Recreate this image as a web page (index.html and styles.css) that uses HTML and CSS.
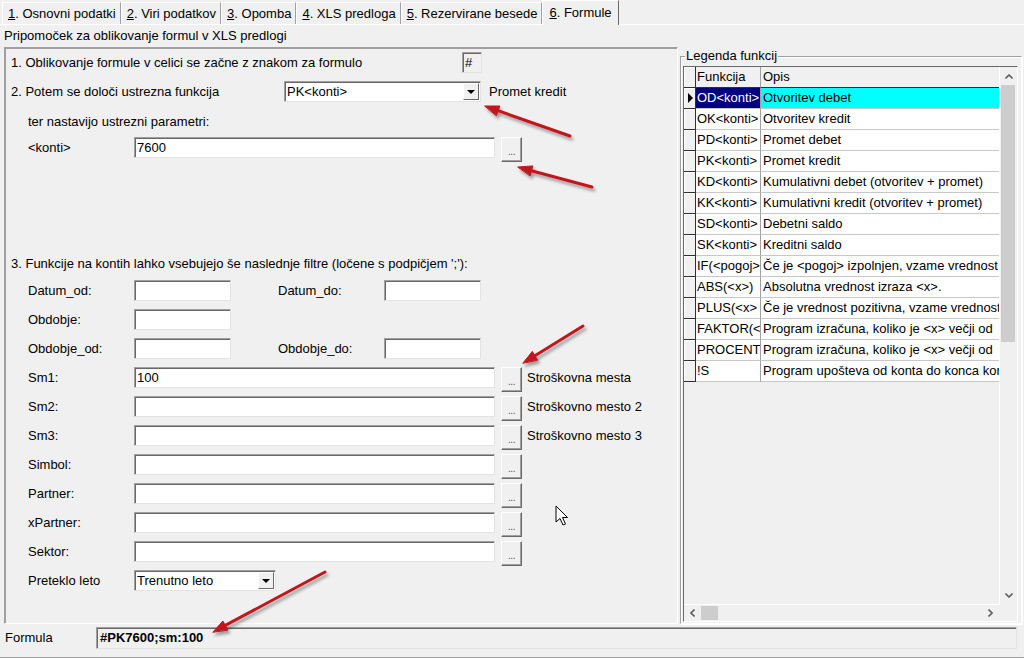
FILE: index.html
```html
<!DOCTYPE html>
<html lang="sl">
<head>
<meta charset="utf-8">
<title>Formule</title>
<link rel="stylesheet" href="styles.css">
</head>
<body>
<div class="window">
  <div class="tabs">
    <div class="tab"><u>1</u>. Osnovni podatki</div>
    <div class="tab"><u>2</u>. Viri podatkov</div>
    <div class="tab"><u>3</u>. Opomba</div>
    <div class="tab"><u>4</u>. XLS predloga</div>
    <div class="tab"><u>5</u>. Rezervirane besede</div>
    <div class="tab active"><u>6</u>. Formule</div>
  </div>
  <div class="caption">Pripomoček za oblikovanje formul v XLS predlogi</div>
  <div class="main">
    <div class="left">
      <div class="row r1 pad">
        <span class="t1">1. Oblikovanje formule v celici se začne z znakom za formulo</span>
        <div class="hash">#</div>
      </div>
      <div class="row r2 pad">
        <span class="t2">2. Potem se določi ustrezna funkcija</span>
        <div class="combo c-fn"><span class="cv">PK&lt;konti&gt;</span><span class="drop"><i></i></span></div>
        <span class="side2">Promet kredit</span>
      </div>
      <div class="row r3 ind">ter nastavijo ustrezni parametri:</div>
      <div class="row r4 ind">
        <span class="lbl">&lt;konti&gt;</span>
        <div class="inp long">7600</div>
        <div class="btn">...</div>
      </div>
      <div class="row r5 pad">3. Funkcije na kontih lahko vsebujejo še naslednje filtre (ločene s podpičjem ';'):</div>
      <div class="row f first ind">
        <span class="lbl">Datum_od:</span><div class="inp short"></div>
        <span class="lbl gap">Datum_do:</span><div class="inp short"></div>
      </div>
      <div class="row f ind">
        <span class="lbl">Obdobje:</span><div class="inp short"></div>
      </div>
      <div class="row f ind">
        <span class="lbl">Obdobje_od:</span><div class="inp short"></div>
        <span class="lbl gap">Obdobje_do:</span><div class="inp short"></div>
      </div>
      <div class="row f ind">
        <span class="lbl">Sm1:</span><div class="inp long">100</div><div class="btn">...</div><span class="side">Stroškovna mesta</span>
      </div>
      <div class="row f ind">
        <span class="lbl">Sm2:</span><div class="inp long"></div><div class="btn">...</div><span class="side">Stroškovno mesto 2</span>
      </div>
      <div class="row f ind">
        <span class="lbl">Sm3:</span><div class="inp long"></div><div class="btn">...</div><span class="side">Stroškovno mesto 3</span>
      </div>
      <div class="row f ind">
        <span class="lbl">Simbol:</span><div class="inp long"></div><div class="btn">...</div>
      </div>
      <div class="row f ind">
        <span class="lbl">Partner:</span><div class="inp long"></div><div class="btn">...</div>
      </div>
      <div class="row f ind">
        <span class="lbl">xPartner:</span><div class="inp long"></div><div class="btn">...</div>
      </div>
      <div class="row f ind">
        <span class="lbl">Sektor:</span><div class="inp long"></div><div class="btn">...</div>
      </div>
      <div class="row f ind">
        <span class="lbl">Preteklo leto</span>
        <div class="combo c-year"><span class="cv">Trenutno leto</span><span class="drop"><i></i></span></div>
      </div>
    </div>

    <fieldset class="legend-box">
      <legend>Legenda funkcij</legend>
      <div class="grid">
        <div class="table">
          <div class="tr head">
            <div class="ic"></div>
            <div class="fc">Funkcija</div>
            <div class="oc">Opis</div>
          </div>
          <div class="tr sel">
            <div class="ic"><span class="caret"></span></div>
            <div class="fc">OD&lt;konti&gt;</div>
            <div class="oc">Otvoritev debet</div>
          </div>
          <div class="tr"><div class="ic"></div><div class="fc">OK&lt;konti&gt;</div><div class="oc">Otvoritev kredit</div></div>
          <div class="tr"><div class="ic"></div><div class="fc">PD&lt;konti&gt;</div><div class="oc">Promet debet</div></div>
          <div class="tr"><div class="ic"></div><div class="fc">PK&lt;konti&gt;</div><div class="oc">Promet kredit</div></div>
          <div class="tr"><div class="ic"></div><div class="fc">KD&lt;konti&gt;</div><div class="oc">Kumulativni debet (otvoritev + promet)</div></div>
          <div class="tr"><div class="ic"></div><div class="fc">KK&lt;konti&gt;</div><div class="oc">Kumulativni kredit (otvoritev + promet)</div></div>
          <div class="tr"><div class="ic"></div><div class="fc">SD&lt;konti&gt;</div><div class="oc">Debetni saldo</div></div>
          <div class="tr"><div class="ic"></div><div class="fc">SK&lt;konti&gt;</div><div class="oc">Kreditni saldo</div></div>
          <div class="tr"><div class="ic"></div><div class="fc">IF(&lt;pogoj&gt;</div><div class="oc">Če je &lt;pogoj&gt; izpolnjen, vzame vrednost</div></div>
          <div class="tr"><div class="ic"></div><div class="fc">ABS(&lt;x&gt;)</div><div class="oc">Absolutna vrednost izraza &lt;x&gt;.</div></div>
          <div class="tr"><div class="ic"></div><div class="fc">PLUS(&lt;x&gt;</div><div class="oc">Če je vrednost pozitivna, vzame vrednost</div></div>
          <div class="tr"><div class="ic"></div><div class="fc">FAKTOR(&lt;</div><div class="oc">Program izračuna, koliko je &lt;x&gt; večji od</div></div>
          <div class="tr"><div class="ic"></div><div class="fc">PROCENT</div><div class="oc">Program izračuna, koliko je &lt;x&gt; večji od</div></div>
          <div class="tr"><div class="ic"></div><div class="fc">!S</div><div class="oc">Program upošteva od konta do konca kon</div></div>
        </div>
        <div class="vscroll">
          <div class="sarrow up"><svg width="8" height="5" viewBox="0 0 8 5"><polyline points="0.5,4.5 4,1 7.5,4.5" fill="none" stroke="#606060" stroke-width="1.6"/></svg></div>
          <div class="vthumb"></div>
          <div class="strack"></div>
          <div class="sarrow down"><svg width="8" height="5" viewBox="0 0 8 5"><polyline points="0.5,0.5 4,4 7.5,0.5" fill="none" stroke="#606060" stroke-width="1.6"/></svg></div>
        </div>
        <div class="hscroll">
          <div class="harrow"><svg width="5" height="8" viewBox="0 0 5 8"><polyline points="4.5,0.5 1,4 4.5,7.5" fill="none" stroke="#606060" stroke-width="1.6"/></svg></div>
          <div class="hthumb"></div>
          <div class="strack"></div>
          <div class="harrow"><svg width="5" height="8" viewBox="0 0 5 8"><polyline points="0.5,0.5 4,4 0.5,7.5" fill="none" stroke="#606060" stroke-width="1.6"/></svg></div>
        </div>
        <div class="corner"></div>
      </div>
    </fieldset>
  </div>
  <div class="formula">
    <span class="flbl">Formula</span>
    <div class="fbox">#PK7600;sm:100</div>
  </div>
</div>

<svg class="overlay" width="1024" height="658" viewBox="0 0 1024 658">
  <defs>
    <filter id="sh" x="-20%" y="-20%" width="140%" height="140%">
      <feDropShadow dx="2" dy="3" stdDeviation="1.8" flood-color="#000" flood-opacity="0.35"/>
    </filter>
  </defs>
  <g filter="url(#sh)" fill="#c0161e" stroke="#c0161e" stroke-linecap="round">
    <line x1="570" y1="136" x2="498" y2="110.7" stroke-width="3"/>
    <polygon points="485,106 499.9,106 496.5,115.4" stroke-width="1"/>
    <line x1="592" y1="187" x2="531.5" y2="170.7" stroke-width="3"/>
    <polygon points="518,167 532.8,165.9 530.2,175.5" stroke-width="1"/>
    <line x1="583" y1="326" x2="534.9" y2="355.7" stroke-width="3"/>
    <polygon points="523,363 532.3,351.4 537.5,359.9" stroke-width="1"/>
    <line x1="325" y1="572" x2="225.3" y2="625.4" stroke-width="3"/>
    <polygon points="213,632 222.9,621 227.7,629.8" stroke-width="1"/>
  </g>
  <path d="M556,506 L556,522 L560,518.5 L563,525 L565.5,524 L562.5,517.5 L567.5,517.5 Z" fill="#fff" stroke="#000" stroke-width="1" stroke-linejoin="round"/>
</svg>
</body>
</html>
```
FILE: styles.css
```css
* { box-sizing: border-box; }
html, body { margin: 0; padding: 0; }
body {
  width: 1024px;
  height: 658px;
  overflow: hidden;
  position: relative;
  background: #f0f0f0;
  font-family: "Liberation Sans", Arial, sans-serif;
  font-size: 13px;
  color: #000;
}
.window { display: flex; flex-direction: column; height: 658px; }

/* tabs */
.tabs {
  display: flex;
  align-items: flex-end;
  height: 25px;
  padding-left: 2px;
  border-bottom: 1px solid #fff;
}
.tab {
  height: 22px;
  line-height: 21px;
  padding: 0 4px 0 5px;
  border-top: 1px solid #fff;
  border-left: 1px solid #fff;
  border-right: 1px solid #a0a0a0;
  white-space: nowrap;
}
.tab.active {
  height: 25px;
  line-height: 23px;
  margin-bottom: -1px;
  padding: 0 6px;
  border-right: 1px solid #696969;
  background: #f0f0f0;
}

.caption { height: 22px; line-height: 22px; padding-left: 4px; }

.main { display: flex; height: 578px; padding-left: 4px; }

/* left panel */
.left {
  width: 674px;
  height: 577px;
  border: 1px solid;
  border-color: #a0a0a0 #fff #fff #a0a0a0;
  box-shadow: 1px 1px 0 #a0a0a0 inset;
}
.row { display: flex; align-items: center; height: 21px; white-space: nowrap; }
.pad { padding-left: 6px; }
.ind { padding-left: 23px; }
.r1 { margin-top: 4px; }
.r2 { margin-top: 8px; }
.r3 { margin-top: 9px; }
.r4 { margin-top: 5px; }
.r5 { margin-top: 95px; }
.f { margin-top: 8px; }
.f.first { margin-top: 6px; }
.t1 { width: 451px; flex: none; }
.t2 { width: 273px; flex: none; }
.side2 { margin-left: 8px; }
.lbl { width: 106px; flex: none; }
.lbl.gap { margin-left: 47px; }
.side { margin-left: 5px; }

.inp, .hash, .combo, .fbox {
  height: 21px;
  border: 1px solid;
  border-color: #a0a0a0 #e3e3e3 #e3e3e3 #a0a0a0;
  box-shadow: 1px 1px 0 #696969 inset;
  background: #fff;
  line-height: 19px;
  padding-left: 2px;
  flex: none;
  overflow: hidden;
}
.inp.long { width: 361px; }
.inp.short { width: 97px; }
.hash { width: 20px; background: #f0f0f0; }

.btn {
  width: 21px;
  height: 25px;
  margin-left: 6px;
  align-self: flex-start;
  flex: none;
  border: 1px solid;
  border-color: #fff #696969 #696969 #fff;
  box-shadow: -1px -1px 0 #a0a0a0 inset;
  background: #f0f0f0;
  font-size: 10px;
  color: #505050;
  text-align: center;
  line-height: 27px;
  letter-spacing: -0.5px;
}

.combo { display: flex; align-items: stretch; padding: 1px 1px 1px 2px; line-height: 17px; }
.c-fn { width: 197px; }
.c-year { width: 142px; }
.combo .cv { flex: 1; }
.combo .drop {
  width: 16px;
  background: #f0f0f0;
  border: 1px solid;
  border-color: #fff #696969 #696969 #fff;
  display: flex;
  align-items: center;
  justify-content: center;
}
.combo .drop i {
  display: block;
  width: 0;
  height: 0;
  border-left: 4px solid transparent;
  border-right: 4px solid transparent;
  border-top: 4px solid #000;
}

/* right panel */
.legend-box {
  margin: 2px 0 0 2px;
  padding: 3px 2px 1px 2px;
  width: 342px;
  border: 1px solid;
  border-color: #a0a0a0 #fff #fff #a0a0a0;
  box-shadow: 1px 1px 0 #fff inset, 1px 1px 0 #fff;
  min-width: 0;
  align-self: flex-start;
}
.legend-box legend {
  padding: 0 1px;
  margin-left: 2px;
  line-height: 14px;
  font-size: 13px;
}
.grid {
  width: 335px;
  height: 556px;
  border: 1px solid;
  border-color: #696969 #fff #fff #696969;
  background: #f0f0f0;
  display: grid;
  grid-template-columns: 315px 18px;
  grid-template-rows: 537px 17px;
  overflow: hidden;
}
.table { overflow: hidden; }
.tr { display: flex; height: 21px; }
.tr > div {
  height: 21px;
  line-height: 20px;
  white-space: nowrap;
  overflow: hidden;
  flex: none;
}
.ic {
  width: 12px;
  background: #f0f0f0;
  border-right: 1px solid #303030;
  border-bottom: 1px solid #303030;
  box-shadow: 1px 1px 0 #fff inset;
  display: flex;
  align-items: center;
  justify-content: center;
}
.fc {
  width: 65px;
  padding-left: 1px;
  background: #fff;
  border-right: 1px solid #a0a0a0;
  border-bottom: 1px solid #c8c8c8;
}
.oc {
  width: 238px;
  padding-left: 2px;
  background: #fff;
  border-bottom: 1px solid #c8c8c8;
}
.head .fc, .head .oc {
  background: #f0f0f0;
  border-bottom: 1px solid #303030;
}
.head .fc { border-right: 1px solid #a0a0a0; }
.sel .fc { background: #000080; color: #fff; }
.sel .oc { background: #00ffff; }
.caret {
  display: block;
  width: 0;
  height: 0;
  border-top: 5px solid transparent;
  border-bottom: 5px solid transparent;
  border-left: 5px solid #000;
  margin-left: 1px;
}

.vscroll {
  display: flex;
  flex-direction: column;
  border-left: 1px solid #fff;
}
.sarrow { height: 18px; display: flex; align-items: center; justify-content: center; flex: none; }
.sarrow.down { height: 17px; }
.vthumb { height: 257px; width: 14px; margin-left: 1px; background: #cdcdcd; flex: none; }
.strack { flex: 1; }
.hscroll { display: flex; border-top: 1px solid #fff; }
.harrow { width: 17px; display: flex; align-items: center; justify-content: center; flex: none; }
.hthumb { width: 17px; margin: 1px 0; background: #cdcdcd; flex: none; }
.corner { background: #f0f0f0; }

/* formula bar */
.formula {
  display: flex;
  align-items: flex-start;
  height: 33px;
  padding-top: 2px;
  border-bottom: 1px solid #a0a0a0;
}
.flbl { width: 96px; padding-left: 5px; line-height: 22px; flex: none; }
.fbox {
  width: 921px;
  height: 22px;
  line-height: 20px;
  padding-left: 3px;
  background: #f0f0f0;
  font-weight: bold;
}

.overlay { position: absolute; left: 0; top: 0; pointer-events: none; }
```
